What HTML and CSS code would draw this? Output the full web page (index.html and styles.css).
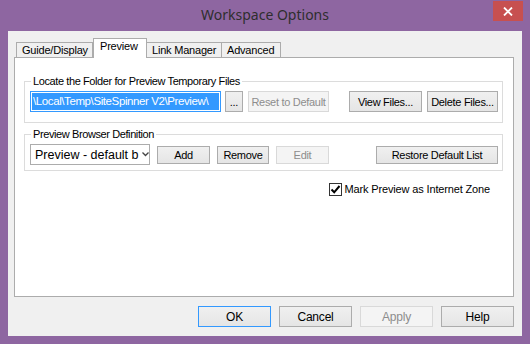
FILE: index.html
```html
<!DOCTYPE html>
<html lang="en">
<head>
    <meta charset="UTF-8">
    <title>Workspace Options</title>
    <link rel="stylesheet" href="styles.css">
</head>
<body>
    <div class="window">
        <div class="titlebar">
            <span class="title">Workspace Options</span>
            <button class="close" title="Close">
                <svg width="10" height="9" viewBox="0 0 10 9">
                    <path d="M1 0.5 L9 8.5 M9 0.5 L1 8.5" stroke="#fff" stroke-width="1.8" fill="none"/>
                </svg>
            </button>
        </div>

        <div class="client">
            <div class="tabs">
                <div class="tab tab-guide">Guide/Display</div>
                <div class="tab tab-preview active">Preview</div>
                <div class="tab tab-links">Link Manager</div>
                <div class="tab tab-advanced">Advanced</div>
            </div>

            <div class="panel">
                <fieldset class="group group-folder">
                    <legend>Locate the Folder for Preview Temporary Files</legend>
                    <div class="row">
                        <div class="path-field"><span class="selection">\Local\Temp\SiteSpinner V2\Preview\</span></div>
                        <button class="btn btn-browse">...</button>
                        <button class="btn btn-reset" disabled>Reset to Default</button>
                        <button class="btn btn-view">View Files...</button>
                        <button class="btn btn-delete">Delete Files...</button>
                    </div>
                </fieldset>

                <fieldset class="group group-browser">
                    <legend>Preview Browser Definition</legend>
                    <div class="row">
                        <div class="combo">
                            <span class="combo-text">Preview - default b</span>
                            <svg class="chevron" width="7" height="5" viewBox="0 0 7 5">
                                <path d="M0.5 0.5 L3.5 3.5 L6.5 0.5" stroke="#444" stroke-width="1.3" fill="none"/>
                            </svg>
                        </div>
                        <button class="btn btn-small btn-add">Add</button>
                        <button class="btn btn-small btn-remove">Remove</button>
                        <button class="btn btn-small btn-edit" disabled>Edit</button>
                        <button class="btn btn-small btn-restore">Restore Default List</button>
                    </div>
                </fieldset>

                <label class="zone-check">
                    <span class="box">
                        <svg width="11" height="11" viewBox="0 0 11 11">
                            <path d="M1.5 5.5 L4.2 8.3 L9.5 2" stroke="#000" stroke-width="2" fill="none"/>
                        </svg>
                    </span>
                    Mark Preview as Internet Zone
                </label>
            </div>

            <div class="actions">
                <button class="btn btn-dialog default">OK</button>
                <button class="btn btn-dialog">Cancel</button>
                <button class="btn btn-dialog" disabled>Apply</button>
                <button class="btn btn-dialog">Help</button>
            </div>
        </div>
    </div>
</body>
</html>
```

FILE: styles.css
```css
* {
    margin: 0;
    padding: 0;
    box-sizing: border-box;
}

body {
    font-family: 'Liberation Sans', Arial, sans-serif;
    font-size: 11px;
    letter-spacing: -0.4px;
    color: #000;
    background: #8e66a1;
}

.window {
    width: 530px;
    height: 344px;
    background: #8e66a1;
    display: flex;
    flex-direction: column;
}

/* title bar */
.titlebar {
    height: 31px;
    display: grid;
    grid-template-columns: 1fr auto 1fr;
    align-items: start;
}

.title {
    grid-column: 2;
    font-family: 'Noto Sans', 'Open Sans', sans-serif;
    font-size: 14px;
    letter-spacing: 0;
    line-height: 20px;
    color: #2e2e2e;
    padding-top: 5px;
}

.close {
    grid-column: 3;
    justify-self: end;
    width: 30px;
    height: 20px;
    margin-top: 1px;
    margin-right: 7px;
    background: #c75050;
    border: none;
    display: flex;
    align-items: center;
    justify-content: center;
}

/* client area */
.client {
    margin: 0 8px;
    height: 305px;
    background: #f0f0f0;
    padding: 8px 8px 0 6px;
    display: flex;
    flex-direction: column;
}

.tabs {
    display: flex;
    align-items: flex-end;
    height: 19px;
    padding-left: 2px;
    margin-bottom: -1px;
}

.tab {
    height: 16px;
    border: 1px solid #acacac;
    border-bottom: none;
    background: #f0f0f0;
    line-height: 14px;
    padding-left: 5px;
    letter-spacing: -0.2px;
}

.tab + .tab {
    border-left: none;
}

.tab-guide { width: 77px; }
.tab-preview { width: 54px; }
.tab-links { width: 75px; }
.tab-advanced { width: 59px; }

.tab.active {
    height: 20px;
    background: #fff;
    position: relative;
    z-index: 1;
    border-left: 1px solid #acacac;
    line-height: 15px;
    padding-left: 6px;
}

.tab.active + .tab {
    border-left: none;
}

.panel {
    width: 500px;
    height: 240px;
    background: #fff;
    border: 1px solid #acacac;
    padding: 17px 10px 0 9px;
    display: flex;
    flex-direction: column;
}

/* group boxes */
.group {
    border: 1px solid #dcdcdc;
    padding: 3px 4px 10px 5px;
}

.group legend {
    margin-left: 1px;
    padding: 0 2px;
    line-height: 13px;
}

.group-browser {
    margin-top: 5px;
    padding-bottom: 5px;
}

.row {
    display: flex;
    align-items: center;
}

.path-field {
    width: 191px;
    height: 21px;
    border: 1px solid #3399ff;
    padding: 1px;
    overflow: hidden;
    white-space: nowrap;
}

.selection {
    display: block;
    height: 17px;
    background: #3399ff;
    color: #fff;
    font-size: 11.5px;
    line-height: 17px;
    padding-left: 1px;
}

.combo {
    width: 120px;
    height: 21px;
    border: 1px solid #acacac;
    display: flex;
    align-items: center;
    padding-left: 4px;
    overflow: hidden;
}

.combo-text {
    width: 106px;
    font-size: 12.5px;
    letter-spacing: 0;
    white-space: nowrap;
    overflow: hidden;
}

.chevron {
    margin-left: 2px;
    flex-shrink: 0;
}

/* buttons */
.btn {
    font-family: inherit;
    font-size: 11px;
    letter-spacing: -0.3px;
    color: #000;
    height: 21px;
    border: 1px solid #acacac;
    background: linear-gradient(#f0f0f0, #e5e5e5);
    white-space: nowrap;
}

.btn:disabled {
    color: #8d8d8d;
    border-color: #d9d9d9;
    background: #f4f4f4;
}

.btn-browse {
    width: 18px;
    margin-left: 4px;
}

.btn-reset {
    width: 81px;
    margin-left: 5px;
}

.btn-view {
    width: 73px;
    margin-left: 20px;
}

.btn-delete {
    width: 71px;
    margin-left: 5px;
}

.btn-small {
    height: 18px;
}

.btn-add {
    width: 53px;
    margin-left: 7px;
}

.btn-remove {
    width: 52px;
    margin-left: 7px;
}

.btn-edit {
    width: 53px;
    margin-left: 7px;
}

.btn-restore {
    width: 122px;
    margin-left: 47px;
}

/* checkbox */
.zone-check {
    display: flex;
    align-items: center;
    justify-content: flex-end;
    gap: 3px;
    margin-top: 12px;
    padding-right: 13px;
    line-height: 13px;
    letter-spacing: -0.15px;
}

.box {
    width: 13px;
    height: 13px;
    border: 1px solid #333;
    display: flex;
    align-items: center;
    justify-content: center;
}

/* dialog buttons */
.actions {
    display: flex;
    justify-content: flex-end;
    gap: 8px;
    margin-top: 9px;
}

.btn-dialog {
    width: 73px;
    font-size: 12px;
    letter-spacing: -0.2px;
}

.btn-dialog.default {
    border-color: #3399ff;
}
```
